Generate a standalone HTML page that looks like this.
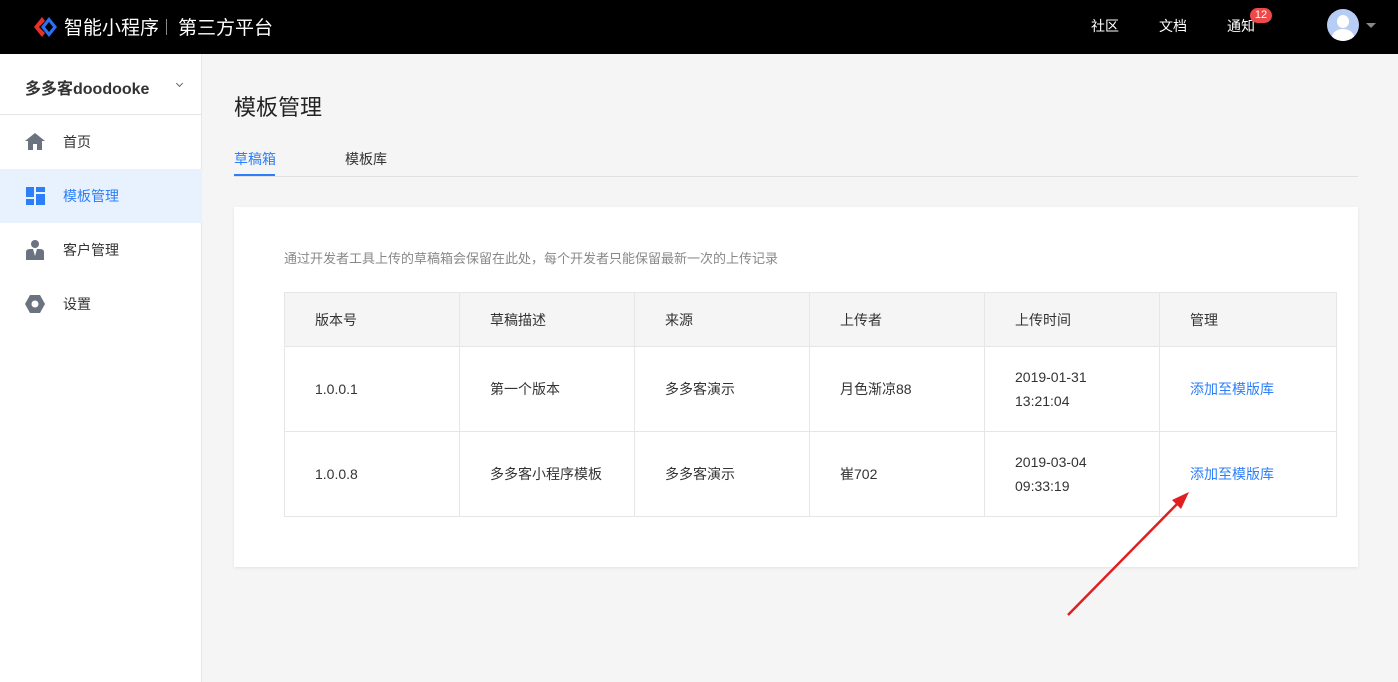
<!DOCTYPE html>
<html><head><meta charset="utf-8"><style>
*{margin:0;padding:0;box-sizing:border-box}
body{width:1398px;height:682px;overflow:hidden;background:#f5f5f5;font-family:"Liberation Sans","Noto Sans CJK SC",sans-serif;position:relative;color:#333}
.top{position:absolute;left:0;top:0;width:1398px;height:54px;background:#000;color:#fff}
.side{position:absolute;left:0;top:54px;width:202px;height:628px;background:#fff;border-right:1px solid #e6e6e6}
.abs{position:absolute}
.nav{position:absolute;left:0;width:202px;height:54px;font-size:14px;color:#333}
.nav span{position:absolute;left:63px;top:17px}
table{border-collapse:collapse;table-layout:fixed;position:absolute;left:284px;top:292px;width:1052px;font-size:14px;color:#333}
td,th{border:1px solid #e6e6e6;text-align:left;padding-left:30px;font-weight:normal;line-height:24px}
th{background:#f5f5f5;height:54px}
td{height:85px;background:#fff}
a{color:#2d7ff9;text-decoration:none}
</style></head><body>
<div class="top">
<svg class="abs" style="left:33px;top:16px" width="24" height="22" viewBox="0 0 24 22"><path d="M9 1 L1 11 L9 21 L12 17 L6 11 L12 5Z" fill="#e8302b"/><path d="M16 1 L8 11 L16 21 L24 11Z" fill="#2d6ff5"/><path d="M16 6 L12 11 L16 16 L20 11Z" fill="#000"/></svg>
<div class="abs" style="left:64px;top:13px;font-size:19px">智能小程序</div>
<div class="abs" style="left:166px;top:19px;width:1px;height:16px;background:#888"></div>
<div class="abs" style="left:178px;top:13px;font-size:19px">第三方平台</div>
<div class="abs" style="left:1091px;top:16px;font-size:14px">社区</div>
<div class="abs" style="left:1159px;top:16px;font-size:14px">文档</div>
<div class="abs" style="left:1227px;top:16px;font-size:14px">通知</div>
<div class="abs" style="left:1250px;top:8px;width:22px;height:15px;border-radius:8px;background:#f04848;font-size:11px;text-align:center;line-height:15px">12</div>
<div class="abs" style="left:1327px;top:9px;width:32px;height:32px;border-radius:50%;background:#b7cdf5;overflow:hidden"><div class="abs" style="left:10px;top:6px;width:12px;height:13px;border-radius:50%;background:#fff"></div><div class="abs" style="left:5px;top:20px;width:22px;height:16px;border-radius:50%;background:#fff"></div></div>
<div class="abs" style="left:1366px;top:23px;border:5px solid transparent;border-top:5px solid #888"></div>
</div>
<div class="side">
<div class="abs" style="left:25px;top:21px;font-size:16px;font-weight:bold">多多客doodooke</div>
<div class="abs" style="left:177px;top:27px;width:5px;height:5px;border-right:1px solid #666;border-bottom:1px solid #666;transform:rotate(45deg)"></div>
<div class="abs" style="left:0;top:60px;width:202px;height:1px;background:#e6e6e6"></div>
<div class="nav" style="top:61px"><svg class="abs" style="left:25px;top:18px" width="20" height="17" viewBox="0 0 20 17"><path d="M10 0 L20 8 L17 8 L17 17 L12 17 L12 11 L8 11 L8 17 L3 17 L3 8 L0 8Z" fill="#6b7280"/></svg><span>首页</span></div>
<div class="nav" style="top:115px;background:#e8f1fe;color:#2d7ff9"><svg class="abs" style="left:26px;top:18px" width="19" height="18" viewBox="0 0 19 18"><rect x="0" y="0" width="8" height="10" fill="#2d7ff9"/><rect x="0" y="12" width="8" height="6" fill="#2d7ff9"/><rect x="10" y="0" width="9" height="5" fill="#2d7ff9"/><rect x="10" y="7" width="9" height="11" fill="#2d7ff9"/></svg><span>模板管理</span></div>
<div class="nav" style="top:169px"><svg class="abs" style="left:26px;top:17px" width="18" height="20" viewBox="0 0 18 20"><circle cx="9" cy="4" r="4" fill="#6b7280"/><path d="M0 20 L0 12 Q0 9 4 9 L14 9 Q18 9 18 12 L18 20Z" fill="#6b7280"/><path d="M7 9 L9 16 L11 9Z" fill="#fff"/></svg><span>客户管理</span></div>
<div class="nav" style="top:223px"><svg class="abs" style="left:25px;top:17px" width="20" height="20" viewBox="0 0 20 20"><path d="M5 1 L15 1 L20 10 L15 19 L5 19 L0 10Z" fill="#6b7280"/><circle cx="10" cy="10" r="3.5" fill="#fff"/></svg><span>设置</span></div>
</div>
<div class="abs" style="left:234px;top:90px;font-size:22px;color:#222">模板管理</div>
<div class="abs" style="left:234px;top:149px;font-size:14px;color:#2d7ff9">草稿箱</div>
<div class="abs" style="left:345px;top:149px;font-size:14px;color:#333">模板库</div>
<div class="abs" style="left:234px;top:176px;width:1124px;height:1px;background:#e0e0e0"></div>
<div class="abs" style="left:234px;top:174px;width:41px;height:2px;background:#2d7ff9"></div>
<div class="abs" style="left:234px;top:207px;width:1124px;height:360px;background:#fff;box-shadow:0 1px 3px rgba(0,0,0,.08)"></div>
<div class="abs" style="left:284px;top:248px;font-size:13px;color:#888">通过开发者工具上传的草稿箱会保留在此处，每个开发者只能保留最新一次的上传记录</div>
<table>
<colgroup><col style="width:175px"><col style="width:175px"><col style="width:175px"><col style="width:175px"><col style="width:175px"><col style="width:177px"></colgroup>
<tr><th>版本号</th><th>草稿描述</th><th>来源</th><th>上传者</th><th>上传时间</th><th>管理</th></tr>
<tr><td>1.0.0.1</td><td>第一个版本</td><td>多多客演示</td><td>月色渐凉88</td><td>2019-01-31<br>13:21:04</td><td><a>添加至模版库</a></td></tr>
<tr><td>1.0.0.8</td><td>多多客小程序模板</td><td>多多客演示</td><td>崔702</td><td>2019-03-04<br>09:33:19</td><td><a>添加至模版库</a></td></tr>
</table>
<svg class="abs" style="left:0;top:0" width="1398" height="682"><line x1="1068" y1="615" x2="1180" y2="501" stroke="#e02020" stroke-width="2.5"/><path d="M1189 492 L1172 500 L1181 509Z" fill="#e02020"/></svg>
</body></html>
